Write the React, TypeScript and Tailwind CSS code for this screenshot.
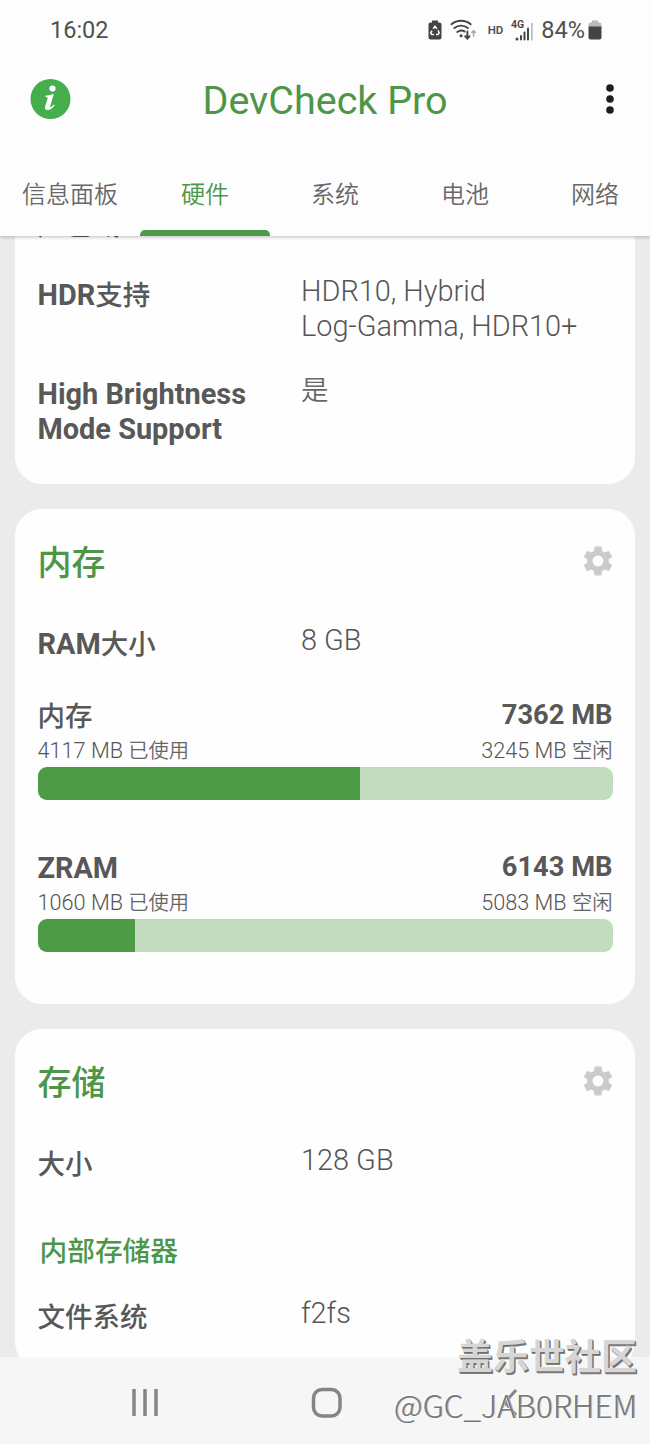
import type { ReactNode } from "react";
import { MdSettings } from "react-icons/md";

const tabs = [
  { label: "信息面板", width: "w-[140px]" },
  { label: "硬件", width: "w-[130px]", active: true },
  { label: "系统", width: "w-[130px]" },
  { label: "电池", width: "w-[130px]" },
  { label: "网络", width: "w-[130px]" },
];

function StatusBar() {
  return (
    <div className="flex h-[60px] items-center pl-[50px] pr-[48px] text-[23.500px] leading-[60px] text-[#505050]">
      <span>16:02</span>
      <div className="ml-auto flex items-center">
        <svg className="mr-[8px] h-[20px] w-[14px]" viewBox="0 0 14 20">
          <path d="M4 0.500h6v2h1.500a2 2 0 0 1 2 2v13a2 2 0 0 1-2 2h-9a2 2 0 0 1-2-2v-13a2 2 0 0 1 2-2H4z" fill="#444" />
          <path d="M5.200 8.800 7 6.200l1.900 2.700M10 10.400l1.200 2.600-1.200 1.600H8M6 14.600H3.700L2.700 13 4 10.600" fill="none" stroke="#fff" strokeWidth="1.500" />
        </svg>
        <svg className="mr-[11px] h-[22px] w-[27px]" viewBox="0 0 28 22">
          <g fill="none" stroke="#444" strokeWidth="2" strokeLinecap="round">
            <path d="M1.500 5a15.500 15.500 0 0 1 20 0" />
            <path d="M4.500 9a11 11 0 0 1 14 0" />
            <path d="M7.600 13a6.500 6.500 0 0 1 7.500 -0.500" />
            <path d="M18 12.500v7M15.800 17.500l2.200 2.300 2.200-2.300" />
          </g>
          <circle cx="11.500" cy="17" r="1.600" fill="#444" />
          <path d="M24.500 18v-6M22.300 14l2.200-2.300 2.200 2.300" fill="none" stroke="#aaa" strokeWidth="1.600" />
        </svg>
        <span className="mr-[7px] text-[11.500px] font-semibold">HD</span>
        <svg className="mr-[7px] h-[22px] w-[24px] overflow-visible" viewBox="0 0 24 22">
          <text x="1" y="9" fontSize="10.500" fontWeight="600" fill="#444">4G</text>
          <g fill="#444">
            <circle cx="7" cy="20" r="1.500" />
            <rect x="10" y="16" width="2" height="5.500" rx="1" />
            <rect x="13.500" y="12.500" width="2" height="9" rx="1" />
            <rect x="17" y="8.500" width="2" height="13" rx="1" />
          </g>
          <rect x="21" y="4" width="1.700" height="17.500" fill="#bbb" />
        </svg>
        <span className="mr-[3px] text-[23.500px]">84%</span>
        <svg className="h-[20px] w-[14px]" viewBox="0 0 14 20">
          <path d="M4 0.500h6v2h1.500a2 2 0 0 1 2 2V7H0.500V4.500a2 2 0 0 1 2-2H4z" fill="#bbb" />
          <path d="M0.500 6.500h13v11a2 2 0 0 1-2 2h-9a2 2 0 0 1-2-2z" fill="#444" />
        </svg>
      </div>
    </div>
  );
}

function Header() {
  return (
    <header className="relative z-10 h-[236px] shrink-0 overflow-visible bg-[#fdfdfd] shadow-[0_1px_4px_rgba(0,0,0,0.25)]">
      <StatusBar />
      <div className="flex h-[78px] items-center pl-[30px] pr-[35px]">
        <svg className="h-[41px] w-[41px]" viewBox="0 0 41 41">
          <circle cx="20.500" cy="20" r="20" fill="#45ad4b" />
          <circle cx="22.500" cy="9.500" r="3.100" fill="#fff" />
          <path d="M15.500 16.700c3-.2 5.800-.8 8.400-1.700l-3.700 12.200c-.3 1.100.5 1.200 1.300.5l2.300-2.300.9.900c-2.200 3.200-4.600 4.800-7.100 4.700-2.400-.1-3.200-1.500-2.500-3.700l2.500-7.700c.3-1-.3-1.400-2.100-1.500z" fill="#fff" />
        </svg>
        <h1 className="ml-[131.500px] pt-[3px] text-[39.500px] leading-[48px] text-[#4d9648]">DevCheck Pro</h1>
        <svg className="ml-auto h-[30px] w-[10px]" viewBox="0 0 10 30" fill="#1d1d1d">
          <circle cx="5" cy="4" r="3.800" />
          <circle cx="5" cy="15" r="3.800" />
          <circle cx="5" cy="26" r="3.800" />
        </svg>
      </div>
      <nav className="flex h-[98px] w-[650px] overflow-hidden">
        {tabs.map((t) => (
          <div key={t.label} className={`flex shrink-0 flex-col items-center ${t.width} ${t.active ? "text-[#4d9648]" : "text-[#686868]"}`}>
            <span className="mt-[40px] text-[24px] leading-[34px] font-[350]">{t.label}</span>
            {t.active && <div className="mt-auto h-[6px] w-full rounded-t-[5px] bg-[#4d9b48]" />}
          </div>
        ))}
      </nav>
    </header>
  );
}

function Row({ label, value, className }: { label: ReactNode; value?: ReactNode; className: string }) {
  return (
    <div className={`flex leading-[34.500px] text-[28.900px] ${className}`}>
      <div className="w-[263.500px] shrink-0 pt-px font-bold text-[#585858]">{label}</div>
      <div className="-mt-[3px] font-light whitespace-nowrap text-[#555]">{value}</div>
    </div>
  );
}

function CardTitle({ children }: { children: ReactNode }) {
  return (
    <div className="flex h-[48px] items-center justify-between">
      <h2 className="pt-[3px] text-[34px] leading-[48px] font-medium text-[#4d9648]">{children}</h2>
      <MdSettings className="-mr-[3px] h-[36px] w-[36px] text-[#cbcbcb]" />
    </div>
  );
}

function Meter({ name, used, free, total, className }: { name: ReactNode; used: number; free: number; total: number; className: string }) {
  return (
    <div className={className}>
      <div className="flex h-[36px] justify-between text-[27.300px] leading-[36px] font-bold text-[#585858]">
        <span className="pt-px text-[28.800px]">{name}</span>
        <span>{total} MB</span>
      </div>
      <div className="flex h-[34px] justify-between pt-px text-[21.700px] leading-[34px] font-light text-[#555]">
        <span>{used} MB <span className="text-[20.300px] font-[350] text-[#666]">已使用</span></span>
        <span>{free} MB <span className="text-[20.300px] font-[350] text-[#666]">空闲</span></span>
      </div>
      <div className="h-[33px] overflow-hidden rounded-[9px] bg-[#c3dcbf]">
        <div className="h-full bg-[#4d9b45]" style={{ width: `${Math.round((used / (used + free)) * 100)}%` }} />
      </div>
    </div>
  );
}

const Cjk = ({ children }: { children: ReactNode }) => <span className="text-[27.500px] font-medium">{children}</span>;

export default function App() {
  return (
    <div className="flex h-[1444px] w-[650px] flex-col overflow-hidden bg-[#ebebeb] font-['Roboto','Noto_Sans_CJK_SC',sans-serif]">
      <Header />
      <main className="flex min-h-0 flex-1 flex-col overflow-hidden px-[15px]">
        <section className="-mt-[40px] h-[288px] shrink-0 rounded-b-[27px] bg-[#fefefe] px-[22.500px] pt-[11px]">
          <Row className="h-[70px]" label={<Cjk>广色域</Cjk>} />
          <Row className="h-[99px]" label={<>HDR<Cjk>支持</Cjk></>} value={<>HDR10, Hybrid<br />Log-Gamma, HDR10+</>} />
          <Row className="h-[69px]" label={<>High Brightness<br />Mode Support</>} value={<span className="text-[27.500px] font-[350] text-[#686868]">是</span>} />
        </section>
        <section className="mt-[25px] h-[495px] shrink-0 rounded-[27px] bg-[#fefefe] px-[22.500px] pt-[28px]">
          <CardTitle>内存</CardTitle>
          <Row className="mt-[41px] h-[35px]" label={<>RAM<Cjk>大小</Cjk></>} value="8 GB" />
          <Meter className="mt-[36px]" name={<Cjk>内存</Cjk>} used={4117} free={3245} total={7362} />
          <Meter className="mt-[49px]" name="ZRAM" used={1060} free={5083} total={6143} />
        </section>
        <section className="mt-[25px] h-[340px] shrink-0 rounded-[27px] bg-[#fefefe] px-[22.500px] pt-[28px]">
          <CardTitle>存储</CardTitle>
          <Row className="mt-[41px] h-[35px]" label={<Cjk>大小</Cjk>} value="128 GB" />
          <h3 className="mt-[53px] h-[36px] pl-[2px] text-[27.700px] leading-[36px] font-medium text-[#4d9648]">内部存储器</h3>
          <Row className="mt-[29px] h-[35px]" label={<Cjk>文件系统</Cjk>} value="f2fs" />
        </section>
      </main>
      <footer className="relative z-10 h-[87px] shrink-0 bg-[#f6f6f6]">
        <svg className="h-[87px] w-[650px]" viewBox="0 0 650 87" fill="none" stroke="#858585" strokeWidth="3.500">
          <path d="M134 32v27M145 32v27M156 32v27" />
          <rect x="313.500" y="32.500" width="26.500" height="26.500" rx="8.500" />
          <path d="M516 33 505 45.500 516 58" strokeWidth="3" />
        </svg>
        <div className="absolute -top-[21px] right-[13px] flex flex-col items-end whitespace-nowrap">
          <span className="text-[36px] leading-[44px] font-bold text-[#d6d6d6] [text-shadow:1px_1px_0_#707070,1.500px_2px_0_#808080]">盖乐世社区</span>
          <span className="font-['Noto_Sans_CJK_SC'] text-[31.500px] leading-[48px] font-light text-[#777] [text-shadow:-1px_-1px_0_#fff,1px_0_0_#b5b5b5]">@GC_JAB0RHEM</span>
        </div>
      </footer>
    </div>
  );
}
